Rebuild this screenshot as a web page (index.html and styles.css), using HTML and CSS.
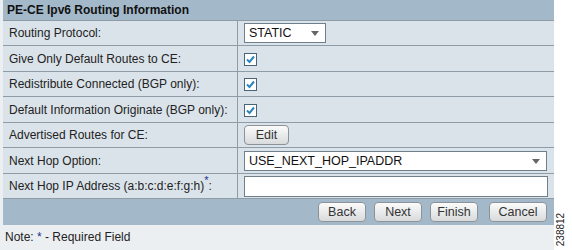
FILE: index.html
```html
<!DOCTYPE html>
<html lang="en">
<head>
  <meta charset="UTF-8">
  <title>PE-CE Ipv6 Routing Information</title>
  <link rel="stylesheet" href="styles.css">
</head>
<body>
  <div class="page">
    <table class="panel">
      <tr class="head">
        <th colspan="2">PE-CE Ipv6 Routing Information</th>
      </tr>
      <tr>
        <td class="label">Routing Protocol:</td>
        <td><span class="select short">STATIC<i class="arrow"></i></span></td>
      </tr>
      <tr class="tall">
        <td class="label">Give Only Default Routes to CE:</td>
        <td><span class="check"><svg width="11" height="11" viewBox="0 0 11 11"><path d="M2 5.5 L4.5 8 L9 2.5" fill="none" stroke="#2a86bd" stroke-width="2"/></svg></span></td>
      </tr>
      <tr>
        <td class="label">Redistribute Connected (BGP only):</td>
        <td><span class="check"><svg width="11" height="11" viewBox="0 0 11 11"><path d="M2 5.5 L4.5 8 L9 2.5" fill="none" stroke="#2a86bd" stroke-width="2"/></svg></span></td>
      </tr>
      <tr class="tall">
        <td class="label">Default Information Originate (BGP only):</td>
        <td><span class="check"><svg width="11" height="11" viewBox="0 0 11 11"><path d="M2 5.5 L4.5 8 L9 2.5" fill="none" stroke="#2a86bd" stroke-width="2"/></svg></span></td>
      </tr>
      <tr>
        <td class="label">Advertised Routes for CE:</td>
        <td><button class="btn edit">Edit</button></td>
      </tr>
      <tr class="tall">
        <td class="label">Next Hop Option:</td>
        <td><span class="select wide">USE_NEXT_HOP_IPADDR<i class="arrow"></i></span></td>
      </tr>
      <tr>
        <td class="label">Next Hop IP Address (a:b:c:d:e:f:g:h)<sup class="req">*</sup>:</td>
        <td><span class="field"></span></td>
      </tr>
      <tr class="foot">
        <td colspan="2">
          <div class="actions">
            <button class="btn">Back</button>
            <button class="btn">Next</button>
            <button class="btn">Finish</button>
            <button class="btn cancel">Cancel</button>
          </div>
        </td>
      </tr>
    </table>
    <p class="note">Note: <span class="star">*</span> - Required Field</p>
  </div>
  <span class="figure-id">238812</span>
</body>
</html>
```

FILE: styles.css
```css
/* Global */
body {
  margin: 0;
  background: #fff;
  font-family: 'Liberation Sans', Arial, sans-serif;
  font-size: 12px;
  color: #222;
}
.page {
  width: 551px;
  height: 250px;
  padding-left: 3px;
  background: #eceff2;
}

/* Panel table */
.panel {
  width: 551px;
  border-collapse: collapse;
}
.panel td,
.panel th {
  padding: 0;
  border-bottom: 1px solid #8e9ca8;
}
.head th {
  height: 20px;
  background: #a3b9c9;
  text-align: left;
  padding-left: 4px;
  font-size: 12px;
  color: #111;
}
.panel tr td {
  height: 24px;
  background: #dbe3ea;
}
.panel tr.tall td { height: 25px; }
.panel td.label {
  width: 228px;
  padding-left: 6px;
  border-right: 1px solid #8e9ca8;
  font-size: 12px;
  color: #222;
}
.panel td + td { padding-left: 6px; }
.req {
  color: #1b2f8f;
  font-size: 11px;
  vertical-align: 6px;
  line-height: 0;
}

/* Controls */
.select {
  position: relative;
  display: flex;
  align-items: center;
  box-sizing: border-box;
  height: 20px;
  padding-left: 4px;
  background: #fff;
  border: 1px solid #6f7f8c;
  font-size: 12.5px;
  color: #111;
}
.select.short { width: 82px; }
.select.wide { width: 303px; }
.arrow {
  position: absolute;
  right: 6px;
  top: 7px;
  border-left: 4px solid transparent;
  border-right: 4px solid transparent;
  border-top: 5px solid #666;
}
.check {
  display: flex;
  align-items: center;
  justify-content: center;
  box-sizing: border-box;
  width: 13px;
  height: 13px;
  margin-top: 1px;
  background: #fff;
  border: 1px solid #4a6478;
}
.field {
  display: block;
  box-sizing: border-box;
  width: 304px;
  height: 21px;
  background: #fff;
  border: 1px solid #6f7f8c;
}
.btn {
  height: 20px;
  padding: 0 8px;
  border: 1px solid #8d9296;
  border-radius: 4px;
  background: linear-gradient(#fbfbfb, #e6e7e8 60%, #d8dadc);
  font-family: inherit;
  font-size: 12.5px;
  color: #333;
}
.btn.edit {
  width: 45px;
  padding: 0;
}

/* Footer */
.panel tr.foot td {
  height: 26px;
  background: #a3b9c9;
  border-bottom: none;
}
.actions {
  display: flex;
  justify-content: flex-end;
  gap: 8px;
  padding-right: 7px;
}
.actions .btn { width: 48px; padding: 0; }
.actions .cancel { width: 58px; margin-left: 3px; }
.note {
  margin: 0;
  padding: 5px 0 0 2px;
  font-size: 12px;
  color: #222;
}
.star { color: #1b2f8f; }
.figure-id {
  position: absolute;
  left: 544px;
  top: 224px;
  transform: rotate(-90deg);
  font-size: 10px;
  color: #222;
}
```
